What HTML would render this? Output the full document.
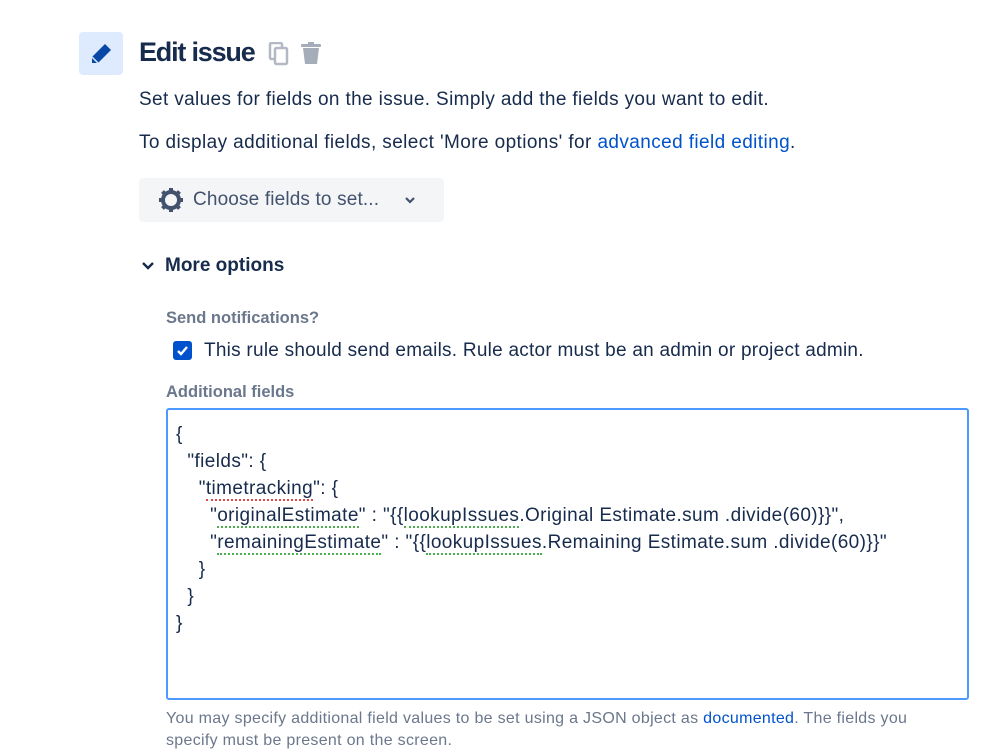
<!DOCTYPE html>
<html><head><style>
body{margin:0;background:#fff;font-family:"Liberation Sans",sans-serif;color:#172b4d;width:999px;height:748px;overflow:hidden;position:relative}
.a{position:absolute;white-space:nowrap}
.sq{border-bottom:2px dotted #e04a4a}
.sg{border-bottom:2px dotted #4cae4c}
</style></head><body>
<div class="a" style="left:79px;top:32px;width:44px;height:43px;background:#deebff;border-radius:4px"></div>
<svg class="a" style="left:88px;top:41px" width="26" height="26" viewBox="0 0 26 26"><path d="M17 3l6 6-13 13H4v-6z" fill="#0747a6"/><path d="M4 16l6 6" stroke="#deebff" stroke-width="1.5"/></svg>
<div class="a" style="left:139px;top:37px;font-size:27px;font-weight:bold;letter-spacing:-1.2px">Edit issue</div>
<svg class="a" style="left:268px;top:42px" width="22" height="24" viewBox="0 0 22 24"><rect x="2" y="1" width="12" height="16" rx="1.5" fill="none" stroke="#b3b9c4" stroke-width="2.5"/><rect x="7" y="6" width="12" height="16" rx="1.5" fill="#fff" stroke="#b3b9c4" stroke-width="2.5"/></svg>
<svg class="a" style="left:299px;top:41px" width="24" height="24" viewBox="0 0 24 24"><rect x="2" y="3" width="20" height="3" rx="1" fill="#a5adba"/><rect x="9" y="1" width="6" height="3" fill="#a5adba"/><path d="M4 7h16l-2 16H6z" fill="#a5adba"/></svg>
<div class="a" style="left:139px;top:89px;font-size:19px;letter-spacing:0.36px">Set values for fields on the issue. Simply add the fields you want to edit.</div>
<div class="a" style="left:139px;top:132px;font-size:19px;letter-spacing:0.4px">To display additional fields, select 'More options' for <span style="color:#0052cc">advanced field editing</span>.</div>
<div class="a" style="left:139px;top:178px;width:305px;height:44px;background:#f4f5f7;border-radius:4px"></div>
<svg class="a" style="left:158px;top:187px" width="26" height="26" viewBox="0 0 26 26"><circle cx="13" cy="13" r="8" fill="none" stroke="#42526e" stroke-width="4"/><g stroke="#42526e" stroke-width="4"><path d="M13 1v5M13 20v5M1 13h5M20 13h5M4.5 4.5l3.5 3.5M18 18l3.5 3.5M4.5 21.5l3.5-3.5M18 8l3.5-3.5"/></g><circle cx="13" cy="13" r="4.5" fill="#f4f5f7"/></svg>
<div class="a" style="left:193px;top:189px;font-size:19px;letter-spacing:0.15px;color:#42526e">Choose fields to set...</div>
<svg class="a" style="left:404px;top:195px" width="12" height="10" viewBox="0 0 12 10"><path d="M2 3l4 4 4-4" fill="none" stroke="#42526e" stroke-width="2.2"/></svg>
<svg class="a" style="left:141px;top:260px" width="14" height="12" viewBox="0 0 14 12"><path d="M2 3l5 5 5-5" fill="none" stroke="#172b4d" stroke-width="2.4"/></svg>
<div class="a" style="left:165px;top:255px;font-size:19px;font-weight:bold">More options</div>
<div class="a" style="left:166px;top:309px;font-size:16.5px;font-weight:bold;color:#6b778c">Send notifications?</div>
<div class="a" style="left:173px;top:341px;width:19px;height:19px;background:#0052cc;border-radius:3px"></div>
<svg class="a" style="left:173px;top:341px" width="19" height="19" viewBox="0 0 19 19"><path d="M5 10l3 3 6-7" fill="none" stroke="#fff" stroke-width="2.4"/></svg>
<div class="a" style="left:204px;top:340px;font-size:19px;letter-spacing:0.25px">This rule should send emails. Rule actor must be an admin or project admin.</div>
<div class="a" style="left:166px;top:383px;font-size:16.5px;font-weight:bold;color:#6b778c">Additional fields</div>
<div class="a" style="left:166px;top:408px;width:799px;height:288px;border:2px solid #4c9aff;border-radius:3px"></div>
<div class="a" style="left:176px;top:421px;font-size:19px;letter-spacing:0.4px;line-height:27px;white-space:pre">{
  "fields": {
    "<span class="sq">timetracking</span>": {
      "<span class="sg">originalEstimate</span>" : "{{<span class="sg">lookupIssues</span>.Original Estimate.sum .divide(60)}}",
      "<span class="sg">remainingEstimate</span>" : "{{<span class="sg">lookupIssues</span>.Remaining Estimate.sum .divide(60)}}"
    }
  }
}</div>
<div class="a" style="left:166px;top:708px;font-size:16px;letter-spacing:0.3px;line-height:22px;color:#6b778c;white-space:normal;width:780px">You may specify additional field values to be set using a JSON object as <span style="color:#0052cc">documented</span>. The fields you specify must be present on the screen.</div>
</body></html>
